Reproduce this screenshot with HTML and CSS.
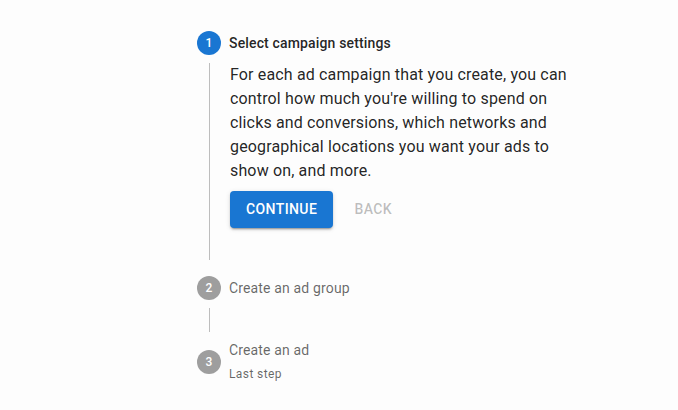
FILE: index.html
```
<!DOCTYPE html>
<html lang="en">
<head>
<meta charset="utf-8">
<title>Vertical stepper</title>
<link rel="stylesheet" href="styles.css">
</head>
<body>
<div class="stepper">
  <div class="step">
    <div class="label">
      <span class="icon active">1</span>
      <div class="label-text active">Select campaign settings</div>
    </div>
    <div class="content">
      <p class="desc">For each ad campaign that you create, you can control how much you're willing to spend on clicks and conversions, which networks and geographical locations you want your ads to show on, and more.</p>
      <div class="actions">
        <button class="btn contained">Continue</button>
        <button class="btn text" disabled>Back</button>
      </div>
    </div>
  </div>
  <div class="connector first"></div>
  <div class="step">
    <div class="label">
      <span class="icon">2</span>
      <div class="label-text">Create an ad group</div>
    </div>
  </div>
  <div class="connector"></div>
  <div class="step">
    <div class="label">
      <span class="icon">3</span>
      <div class="label-col">
        <div class="label-text">Create an ad</div>
        <div class="caption">Last step</div>
      </div>
    </div>
  </div>
</div>
</body>
</html>
```

FILE: styles.css
```
html, body {
  margin: 0;
  padding: 0;
  background: #fdfdfd;
}

body {
  font-family: Roboto, "Liberation Sans", Arial, sans-serif;
  color: rgba(0, 0, 0, 0.87);
}

.stepper {
  display: flex;
  flex-direction: column;
  width: 400px;
  margin-left: 197px;
  padding-top: 23px;
}

.label {
  display: flex;
  align-items: center;
  padding: 8px 0;
}

.icon {
  flex: none;
  width: 24px;
  height: 24px;
  border-radius: 50%;
  background: #9e9e9e;
  color: #fff;
  font-size: 12px;
  font-weight: 500;
  line-height: 24px;
  text-align: center;
  margin-right: 8px;
}

.icon.active {
  background: #1976d2;
}

.label-text {
  font-size: 14px;
  line-height: 20px;
  letter-spacing: 0.15px;
  color: rgba(0, 0, 0, 0.6);
}

.label-text.active {
  color: rgba(0, 0, 0, 0.87);
  font-weight: 500;
}

.label-col {
  display: flex;
  flex-direction: column;
}

.caption {
  font-size: 12px;
  line-height: 20px;
  margin-top: 4px;
  letter-spacing: 0.4px;
  color: rgba(0, 0, 0, 0.6);
}

.content {
  margin-left: 12px;
  padding-left: 20px;
  padding-right: 8px;
  border-left: 1px solid #bdbdbd;
  padding-bottom: 8px;
}

.desc {
  margin: 0;
  font-size: 16px;
  line-height: 24px;
  letter-spacing: 0.15px;
}

.actions {
  display: flex;
  gap: 8px;
  padding-top: 8px;
}

.btn {
  font-family: inherit;
  font-size: 14px;
  font-weight: 500;
  line-height: 24.5px;
  letter-spacing: 0.4px;
  text-transform: uppercase;
  border: none;
  border-radius: 4px;
  min-width: 64px;
  cursor: pointer;
}

.btn.contained {
  background: #1976d2;
  color: #fff;
  padding: 6px 16px;
  box-shadow: 0 3px 1px -2px rgba(0, 0, 0, 0.2), 0 2px 2px 0 rgba(0, 0, 0, 0.14), 0 1px 5px 0 rgba(0, 0, 0, 0.12);
}

.btn.text {
  background: transparent;
  color: rgba(0, 0, 0, 0.26);
  padding: 6px 8px;
}

.connector {
  margin-left: 12px;
  border-left: 1px solid #bdbdbd;
  height: 24px;
}

.connector.first {
  margin-bottom: 8px;
}
```
